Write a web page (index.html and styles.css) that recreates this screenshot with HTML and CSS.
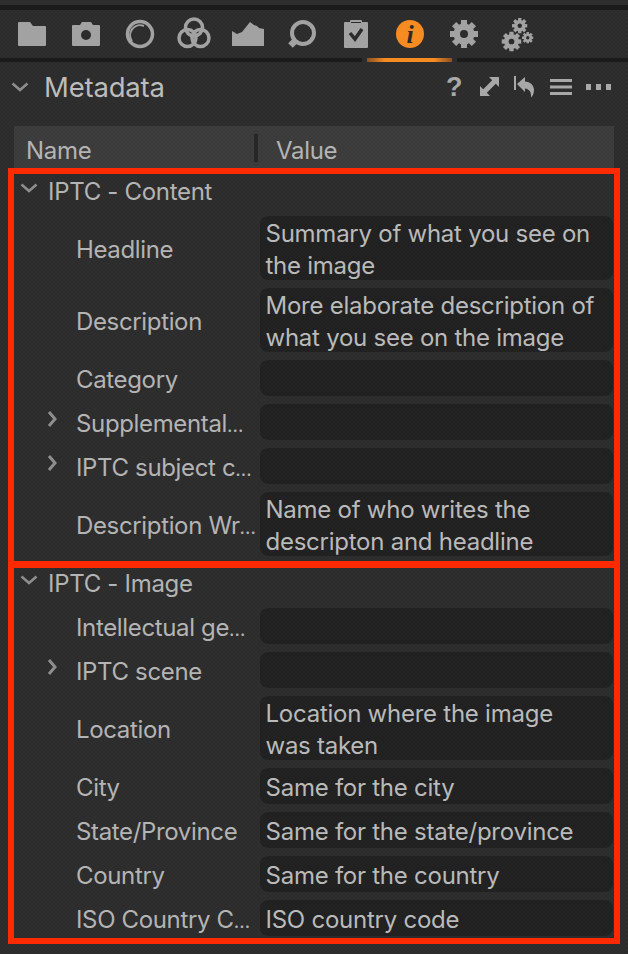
FILE: index.html
```html
<!DOCTYPE html>
<html lang="en">

<head>
    <meta charset="UTF-8">
    <title>Metadata</title>
    <link rel="stylesheet" href="styles.css">
</head>

<body>
    <svg class="defs" width="0" height="0">
        <symbol id="gear" viewBox="0 0 28 28">
            <circle cx="14" cy="14" r="10.5" />
            <rect x="11" y="0" width="6" height="28" />
            <rect x="11" y="0" width="6" height="28" transform="rotate(45 14 14)" />
            <rect x="11" y="0" width="6" height="28" transform="rotate(90 14 14)" />
            <rect x="11" y="0" width="6" height="28" transform="rotate(135 14 14)" />
            <circle class="hole" cx="14" cy="14" r="4" />
        </symbol>
        <symbol id="chevron-down" viewBox="0 0 18 10">
            <path d="M1.5 1.5 9 8 16.5 1.5" />
        </symbol>
        <symbol id="chevron-right" viewBox="0 0 10 18">
            <path d="M2 2 8 9 2 16" />
        </symbol>
    </svg>

    <div class="top-strip"></div>

    <nav class="tabs">
        <svg class="tab" viewBox="0 0 40 40">
            <path d="M7 8h11l3 4h12a1 1 0 0 1 1 1v18a1 1 0 0 1-1 1H7a1 1 0 0 1-1-1V9a1 1 0 0 1 1-1z" />
        </svg>
        <svg class="tab" viewBox="0 0 40 40">
            <path d="M7 11h7l2-3h9l2 3h6a1 1 0 0 1 1 1v19a1 1 0 0 1-1 1H7a1 1 0 0 1-1-1V12a1 1 0 0 1 1-1z" />
            <circle class="cut" cx="20" cy="21" r="5" />
        </svg>
        <svg class="tab" viewBox="0 0 40 40">
            <circle class="ring" cx="20" cy="20" r="12.5" />
            <path class="thin" d="M12 27a10 10 0 0 1 12-15" />
        </svg>
        <svg class="tab" viewBox="0 0 40 40">
            <circle class="ring" cx="20" cy="13.5" r="8.5" />
            <circle class="ring" cx="13.5" cy="24" r="8.5" />
            <circle class="ring" cx="26.5" cy="24" r="8.5" />
        </svg>
        <svg class="tab" viewBox="0 0 40 40">
            <path d="M4 17 9 20 14 18 22 8 26 11 29 12 31 14 36 15V32H4z" />
        </svg>
        <svg class="tab" viewBox="0 0 40 40">
            <circle class="ring ring-loupe" cx="21" cy="19" r="11" />
            <path class="handle" d="M13 27 8.5 31.5" />
        </svg>
        <svg class="tab" viewBox="0 0 40 40">
            <path d="M9 8h5v-1a1 1 0 0 1 1-1h10a1 1 0 0 1 1 1v1h5a1 1 0 0 1 1 1v24a1 1 0 0 1-1 1H9a1 1 0 0 1-1-1V9a1 1 0 0 1 1-1z" />
            <path class="cut-line" d="M15 8.500h10" />
            <path class="check" d="M14 19 19 25 26 15" />
        </svg>
        <svg class="tab" viewBox="0 0 40 40">
            <circle class="info" cx="20" cy="20" r="14" />
            <text class="info-i" x="20" y="29">i</text>
        </svg>
        <svg class="tab" viewBox="0 0 40 40">
            <use href="#gear" x="6" y="6" width="28" height="28" />
        </svg>
        <svg class="tab" viewBox="0 0 40 40">
            <use href="#gear" x="3.500" y="17.500" width="20" height="20" />
            <use href="#gear" x="14" y="4" width="15.500" height="15.500" />
            <use href="#gear" x="24" y="18" width="11.500" height="11.500" />
        </svg>
    </nav>
    <div class="tab-rule"></div>

    <header class="panel-head">
        <svg class="chevron chevron-panel"><use href="#chevron-down" /></svg>
        <h1>Metadata</h1>
        <div class="panel-tools">
            <span class="help">?</span>
            <svg class="tool" width="20" height="20" viewBox="0 0 20 20">
                <path d="M9 0h10v10l-3.200-3.200L6.800 15.800 10 19H0V9l3.200 3.200 9-9z" />
            </svg>
            <svg class="tool" width="22" height="22" viewBox="0 0 22 22">
                <path d="M0 0h2v14H0zM3 8 11 1v4.500c5 .5 9 3.500 9 8.500 0 3-1 5.500-3 7.500.5-5-1.500-8.500-6-9V16z" />
            </svg>
            <svg class="tool" width="22" height="16" viewBox="0 0 22 16">
                <path d="M0 0h22v3H0zM0 6.500h22v3H0zM0 13h22v3H0z" />
            </svg>
            <svg class="tool" width="25" height="6" viewBox="0 0 25 6">
                <path d="M0 0h5v6H0zM10 0h5v6h-5zM20 0h5v6h-5z" />
            </svg>
        </div>
    </header>

    <div class="columns">
        <span class="col-name">Name</span>
        <span class="col-value">Value</span>
    </div>

    <section class="group group-content">
        <h2 class="group-head"><svg class="chevron chevron-group"><use href="#chevron-down" /></svg>IPTC - Content</h2>
        <div class="row">
            <div class="label"><span class="slot"></span><span class="name">Headline</span></div>
            <div class="field field-two">Summary of what you see on<br>the image</div>
        </div>
        <div class="row">
            <div class="label"><span class="slot"></span><span class="name">Description</span></div>
            <div class="field field-two">More elaborate description of<br>what you see on the image</div>
        </div>
        <div class="row">
            <div class="label"><span class="slot"></span><span class="name">Category</span></div>
            <div class="field"></div>
        </div>
        <div class="row">
            <div class="label"><span class="slot"><svg class="chevron chevron-row"><use href="#chevron-right" /></svg></span><span class="name">Supplemental<span class="more">…</span></span></div>
            <div class="field"></div>
        </div>
        <div class="row">
            <div class="label"><span class="slot"><svg class="chevron chevron-row"><use href="#chevron-right" /></svg></span><span class="name">IPTC subject c<span class="more">…</span></span></div>
            <div class="field"></div>
        </div>
        <div class="row">
            <div class="label"><span class="slot"></span><span class="name">Description Wr<span class="more">…</span></span></div>
            <div class="field field-two">Name of who writes the<br>descripton and headline</div>
        </div>
    </section>

    <section class="group group-image">
        <h2 class="group-head"><svg class="chevron chevron-group"><use href="#chevron-down" /></svg>IPTC - Image</h2>
        <div class="row">
            <div class="label"><span class="slot"></span><span class="name">Intellectual ge<span class="more">…</span></span></div>
            <div class="field"></div>
        </div>
        <div class="row">
            <div class="label"><span class="slot"><svg class="chevron chevron-row"><use href="#chevron-right" /></svg></span><span class="name">IPTC scene</span></div>
            <div class="field"></div>
        </div>
        <div class="row">
            <div class="label"><span class="slot"></span><span class="name">Location</span></div>
            <div class="field field-two">Location where the image<br>was taken</div>
        </div>
        <div class="row">
            <div class="label"><span class="slot"></span><span class="name">City</span></div>
            <div class="field">Same for the city</div>
        </div>
        <div class="row">
            <div class="label"><span class="slot"></span><span class="name">State/Province</span></div>
            <div class="field">Same for the state/province</div>
        </div>
        <div class="row">
            <div class="label"><span class="slot"></span><span class="name">Country</span></div>
            <div class="field">Same for the country</div>
        </div>
        <div class="row">
            <div class="label"><span class="slot"></span><span class="name">ISO Country C<span class="more">…</span></span></div>
            <div class="field">ISO country code</div>
        </div>
    </section>
</body>

</html>
```

FILE: styles.css
```css
html {
    background-color: #2b2b2b;
}

body {
    margin: 0;
    height: 954px;
    overflow: hidden;
    color: #b4b4b4;
    font-family: Inter, "Liberation Sans", sans-serif;
    font-size: 24px;
    letter-spacing: -0.3px;
    background-color: #2b2b2b;
    /* faint dotted texture of the app */
    background-image:
        radial-gradient(circle, rgba(255, 255, 255, 0.028) 0.6px, transparent 1px),
        radial-gradient(circle, rgba(255, 255, 255, 0.028) 0.6px, transparent 1px);
    background-size: 4px 4px;
    background-position: 0 0, 2px 2px;
}

.defs {
    position: absolute;
}

.defs circle,
.defs rect {
    fill: #a2a2a2;
}

.defs .hole {
    fill: #2b2b2b;
}

.top-strip {
    height: 5px;
    background-color: #2e2e2e;
    border-bottom: 5px solid #1b1b1b;
}

.tabs {
    display: flex;
    height: 48px;
    padding-left: 5px;
    align-items: center;
}

.tab {
    width: 54px;
    height: 40px;
    padding: 0 7px;
    box-sizing: border-box;
    flex: none;
    fill: #a2a2a2;
}

.tab .cut {
    fill: #2b2b2b;
}

.tab .ring {
    fill: none;
    stroke: #a2a2a2;
    stroke-width: 3.5;
}

.tab .ring-loupe {
    stroke-width: 4;
}

.tab .thin {
    fill: none;
    stroke: #a2a2a2;
    stroke-width: 2;
}

.tab .handle {
    fill: none;
    stroke: #a2a2a2;
    stroke-width: 6.5;
}

.tab .cut-line {
    fill: none;
    stroke: #2b2b2b;
    stroke-width: 1;
}

.tab .check {
    fill: none;
    stroke: #2b2b2b;
    stroke-width: 3.5;
}

.tab .info {
    fill: #f68b22;
}

.tab .info-i {
    fill: #2b2b2b;
    font-family: "Liberation Serif", serif;
    font-size: 26px;
    font-style: italic;
    font-weight: bold;
    text-anchor: middle;
}

.tab-rule {
    height: 4px;
    background-image: linear-gradient(to right,
            #1b1b1b 362px, transparent 362px,
            transparent 367px, #8a5220 367px,
            #f68b22 385px, #f68b22 434px,
            #8a5220 452px, transparent 452px,
            transparent 457px, #1b1b1b 457px);
}

.panel-head {
    display: flex;
    align-items: center;
    height: 50px;
    margin-bottom: 14px;
    padding-left: 11px;
}

h1 {
    margin: 0 0 0 15px;
    font-size: 27.500px;
    font-weight: 400;
    letter-spacing: -0.2px;
    color: #bcbcbc;
}

.panel-tools {
    display: flex;
    align-items: center;
    margin-left: auto;
    margin-right: 17px;
    gap: 14px;
    fill: #a8a8a8;
}

.help {
    width: 20px;
    margin-right: 2px;
    text-align: center;
    font-family: "Liberation Sans", sans-serif;
    font-size: 27px;
    font-weight: bold;
    line-height: 24px;
    color: #a8a8a8;
}

.chevron {
    fill: none;
    stroke: #8e8e8e;
    stroke-width: 2.500;
    flex: none;
}

.chevron-panel {
    width: 18px;
    height: 10px;
}

.chevron-group {
    width: 18px;
    height: 10px;
    margin: -6px 10px 0 6px;
}

.chevron-row {
    width: 12px;
    height: 18px;
    margin-top: -6px;
    stroke-width: 3;
}

.columns {
    display: flex;
    align-items: center;
    height: 42px;
    margin: 0 14px;
    background-color: rgba(255, 255, 255, 0.075);
}

.col-name {
    width: 228px;
    padding-left: 12px;
    padding-top: 6px;
}

.col-value {
    padding-left: 18px;
    border-left: 4px solid #272727;
    height: 28px;
    line-height: 34px;
    margin-top: 2px;
}

.group {
    display: flex;
    flex-direction: column;
    gap: 8px;
    margin: 0 8px;
    border: 6px solid #ff2a00;
}

.group-content {
    border-bottom: 0;
    padding: 2px 0 5px;
}

.group-image {
    border-top-width: 7px;
    padding-bottom: 2px;
}

.group-head {
    display: flex;
    align-items: center;
    height: 32px;
    margin: 0;
    padding-bottom: 2px;
    box-sizing: border-box;
    font-size: 24px;
    font-weight: 400;
}

.row {
    display: grid;
    grid-template-columns: 246px 353px;
    align-items: center;
}

.label {
    display: flex;
    align-items: center;
    padding-left: 32px;
}

.slot {
    display: flex;
    width: 30px;
    flex: none;
}

.name {
    margin-top: 2px;
    white-space: nowrap;
    letter-spacing: -0.35px;
}

.more {
    font-size: 19px;
}

.field {
    height: 36px;
    padding: 4px 5.500px 0;
    box-sizing: border-box;
    border-radius: 8px;
    background-color: rgba(0, 0, 0, 0.24);
    line-height: 32px;
    color: #bababa;
    white-space: nowrap;
    letter-spacing: -0.25px;
}

.field-two {
    height: 64px;
    padding-top: 2px;
}
```
